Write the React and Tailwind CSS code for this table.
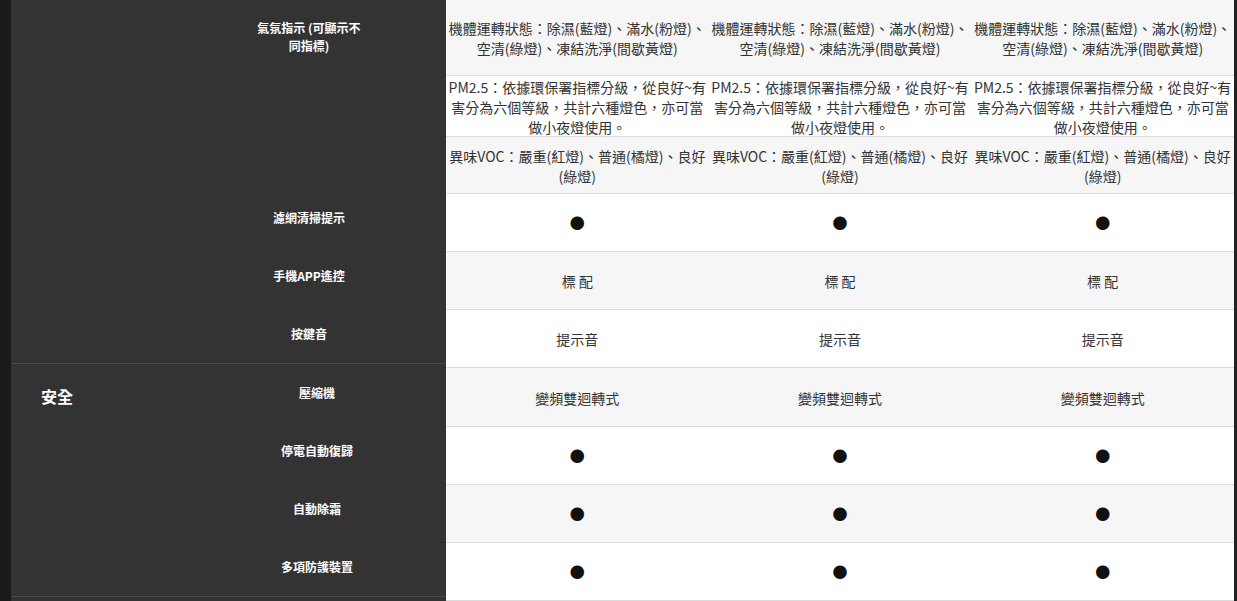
const FONT = { fontFamily: '"Noto Sans CJK TC", "Noto Sans", sans-serif' };

const dataRows = [
  { h: 'h-[76px]', text: '機體運轉狀態：除濕(藍燈)、滿水(粉燈)、空清(綠燈)、凍結洗淨(間歇黃燈)', gray: true },
  { h: 'h-[61px]', text: 'PM2.5：依據環保署指標分級，從良好~有害分為六個等級，共計六種燈色，亦可當做小夜燈使用。', gray: false },
  { h: 'h-[57px]', text: '異味VOC：嚴重(紅燈)、普通(橘燈)、良好(綠燈)', gray: true },
  { h: 'h-[58px]', text: '●', gray: false, dot: true },
  { h: 'h-[58px]', text: '標 配', gray: true },
  { h: 'h-[58px]', text: '提示音', gray: false },
  { h: 'h-[59px]', text: '變頻雙迴轉式', gray: true },
  { h: 'h-[58px]', text: '●', gray: false, dot: true },
  { h: 'h-[58px]', text: '●', gray: true, dot: true },
  { h: 'h-[58px]', text: '●', gray: false, dot: true },
];

function Label({ children }) {
  return (
    <div className="h-[58px] flex items-center justify-center">
      <span className="text-[12px] font-bold text-white leading-[18px]">{children}</span>
    </div>
  );
}

export default function App() {
  return (
    <div className="flex h-[601px] w-[1237px] overflow-hidden bg-[#1b1b1b]" style={FONT}>
      <div className="w-[11px] shrink-0" />

      {/* dark label panel */}
      <div className="w-[435px] shrink-0 bg-[#333333] flex flex-col">
        <div className="flex h-[364px] border-b border-[#4d4d4d]">
          <div className="w-[161px] shrink-0" />
          <div className="flex-1 flex flex-col">
            <div className="h-[189px] flex justify-center pt-[19px]">
              <p className="w-[110px] text-center text-[12px] font-bold text-white leading-[18px]">
                氣氛指示 (可顯示不同指標)
              </p>
            </div>
            <Label>濾網清掃提示</Label>
            <Label>手機APP遙控</Label>
            <Label>按鍵音</Label>
          </div>
        </div>
        <div className="flex h-[233px] border-b border-[#4d4d4d]">
          <div className="w-[177px] shrink-0 pl-[30px] pt-[20px]">
            <span className="text-[16px] font-bold text-white leading-[24px]">安全</span>
          </div>
          <div className="flex-1 flex flex-col">
            <Label>壓縮機</Label>
            <Label>停電自動復歸</Label>
            <Label>自動除霜</Label>
            <Label>多項防護裝置</Label>
          </div>
        </div>
      </div>

      {/* data table */}
      <div className="w-[788px] shrink-0 flex flex-col">
        {dataRows.map((r, i) => (
          <div
            key={i}
            className={`${r.h} shrink-0 grid grid-cols-3 border-b border-[#dcdcdc] ${r.gray ? 'bg-[#f6f6f6]' : 'bg-white'}`}
          >
            {[0, 1, 2].map((c) => (
              <div key={c} className="flex items-center justify-center px-[2px] pt-[1px] text-center">
                <span className={r.dot ? 'text-[15px] text-[#111] leading-[20px]' : 'text-[14px] text-[#333] leading-[20px]'}>
                  {r.text}
                </span>
              </div>
            ))}
          </div>
        ))}
      </div>

      <div className="flex-1 bg-[#222]" />
    </div>
  );
}
